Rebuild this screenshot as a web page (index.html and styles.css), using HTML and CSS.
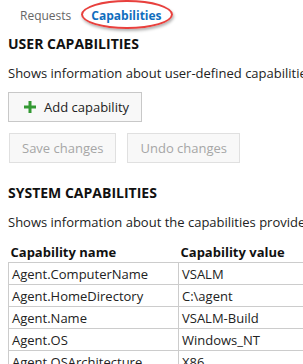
FILE: index.html
```html
<!DOCTYPE html>
<html lang="en">
<head>
    <meta charset="UTF-8">
    <meta name="viewport" content="width=device-width, initial-scale=1.0">
    <title>Capabilities</title>
    <link rel="stylesheet" href="styles.css">
</head>
<body>
    <div class="tabs">
        <span class="tab">Requests</span>
        <span class="tab active">Capabilities</span>
    </div>

    <h2>USER CAPABILITIES</h2>
    <p class="desc">Shows information about user-defined capabilities supported by this agent.</p>

    <div class="toolbar">
        <button class="btn">
            <svg class="plus" width="12" height="12" viewBox="0 0 12 12">
                <path d="M4.5 0h3v4.5h4.5v3h-4.5v4.5h-3v-4.5h-4.5v-3h4.5z" fill="#339933"/>
            </svg>
            Add capability
        </button>
    </div>
    <div class="toolbar actions">
        <button class="btn disabled">Save changes</button>
        <button class="btn disabled">Undo changes</button>
    </div>

    <h2 class="system">SYSTEM CAPABILITIES</h2>
    <p class="desc">Shows information about the capabilities provided by this agent.</p>

    <table class="caps">
        <tr>
            <th class="name">Capability name</th>
            <th>Capability value</th>
        </tr>
        <tr><td>Agent.ComputerName</td><td>VSALM</td></tr>
        <tr><td>Agent.HomeDirectory</td><td>C:\agent</td></tr>
        <tr><td>Agent.Name</td><td>VSALM-Build</td></tr>
        <tr><td>Agent.OS</td><td>Windows_NT</td></tr>
        <tr><td>Agent.OSArchitecture</td><td>X86</td></tr>
    </table>
</body>
</html>
```

FILE: styles.css
```css
body {
    font-family: "Open Sans", "Noto Sans", Arial, sans-serif;
    font-size: 13px;
    color: #222;
    margin: 0;
    padding: 0 0 0 8px;
    overflow: hidden;
    white-space: nowrap;
}
.tabs {
    display: flex;
    gap: 20px;
    height: 32px;
    align-items: center;
    padding-left: 12px;
    font-size: 12px;
    line-height: 16px;
}
.tab {
    color: #666;
}
.tab.active {
    position: relative;
    color: #106ebe;
    font-weight: bold;
}
.tab.active::after {
    content: "";
    position: absolute;
    left: -10px;
    right: -11px;
    top: -8px;
    bottom: -5px;
    border: 2.5px solid #e8403d;
    border-radius: 50%;
    box-shadow: 1px 2px 3px rgba(0, 0, 0, 0.3);
}
h2 {
    font-size: 14px;
    font-weight: bold;
    color: #111;
    margin: 2px 0 0 0;
    line-height: 20px;
}
.desc {
    margin: 10px 0 0 0;
    line-height: 18px;
}
.toolbar {
    display: flex;
    gap: 11px;
    margin-top: 10px;
}
.toolbar.actions {
    margin-top: 11px;
    margin-left: 1px;
}
.btn {
    font-family: inherit;
    font-size: 13px;
    height: 30px;
    border: 1px solid #c8c8c8;
    background-color: #f8f8f8;
    color: #222;
    padding: 0 12px;
    display: flex;
    align-items: center;
    gap: 8px;
}
.toolbar:first-of-type .btn {
    margin-left: 3px;
}
.btn.disabled {
    border-color: #e0e0e0;
    color: #a6a6a6;
}
.plus {
    margin-left: 3px;
}
h2.system {
    margin-top: 20px;
}
.caps {
    border-collapse: collapse;
    margin-top: 10px;
    width: 310px;
}
.caps th {
    text-align: left;
    font-weight: bold;
    color: #111;
    padding: 0 2px;
    height: 21px;
}
.caps th.name {
    width: 166px;
}
.caps td {
    border: 1px solid #cccccc;
    border-right: none;
    padding: 0 2px 0 3px;
    height: 21px;
}
```
